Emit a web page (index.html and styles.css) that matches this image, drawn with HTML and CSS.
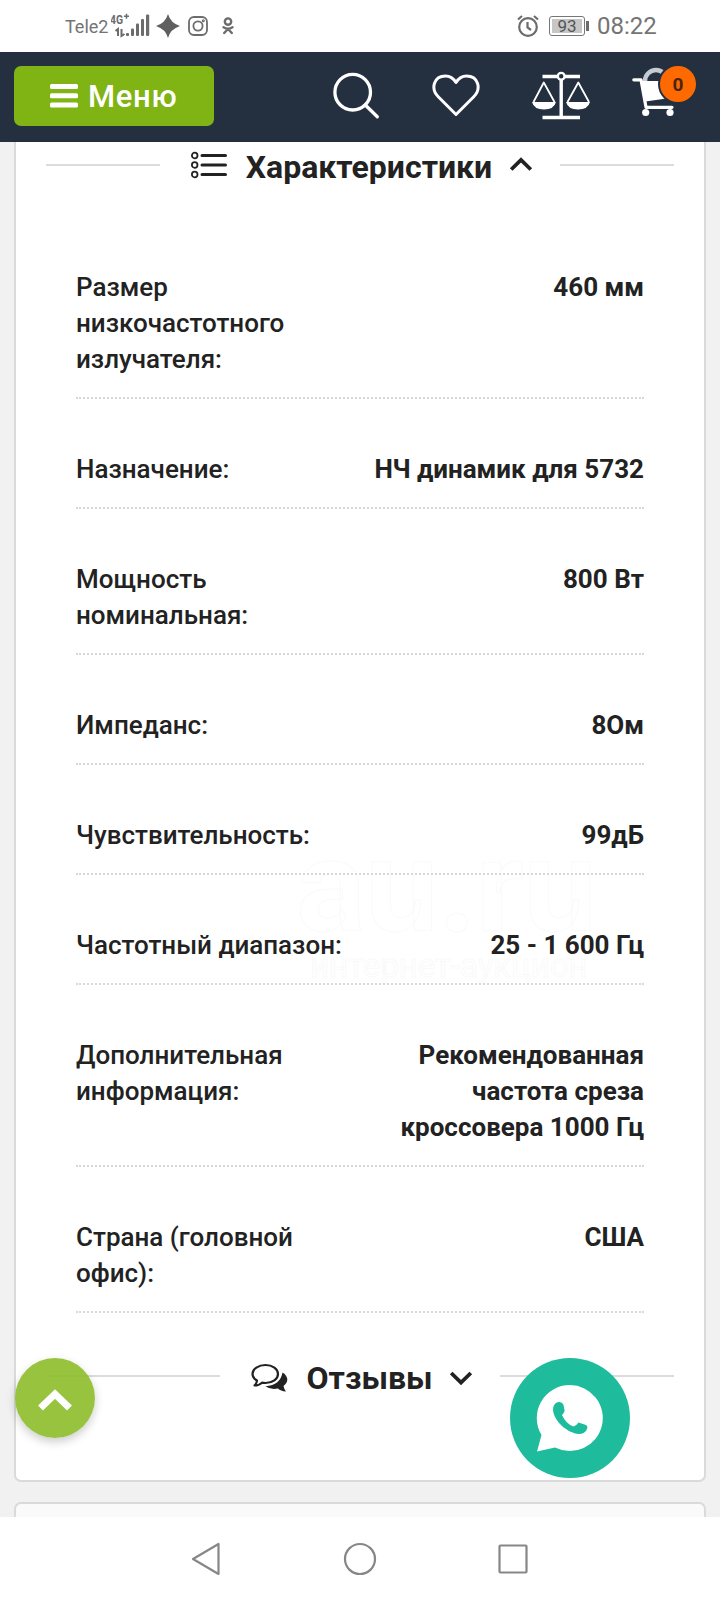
FILE: index.html
```html
<!DOCTYPE html>
<html lang="ru">
<head>
  <meta charset="UTF-8" />
  <meta name="viewport" content="width=device-width, initial-scale=1.0"/>
  <title>Характеристики</title>
  <link rel="stylesheet" href="styles.css">
</head>
<body>

<div class="status-bar">
  <span class="operator">Tele2</span>
  <svg class="signal" width="40" height="26" viewBox="0 0 40 26" fill="#6c6c6c">
    <text x="-1" y="11" font-size="13" font-weight="700" textLength="13" lengthAdjust="spacingAndGlyphs">4G</text>
    <path d="M13 3.200h5M15.500 .8v5" stroke="#6c6c6c" stroke-width="1.500"/>
    <path d="M4.500 18l2.500-2v7M10.500 16v7l3-2" stroke="#6c6c6c" stroke-width="2" fill="none"/>
    <rect x="15" y="20" width="3" height="3" rx="1"/>
    <rect x="20" y="15.500" width="3" height="7.500" rx="1"/>
    <rect x="25" y="10.500" width="3" height="12.500" rx="1"/>
    <rect x="30" y="6" width="3" height="17" rx="1"/>
    <rect x="35" y="1.500" width="3.200" height="21.500" rx="1"/>
  </svg>
  <svg class="star" width="24" height="24" viewBox="0 0 24 24" fill="#5f5f5f">
    <path d="M12 0Q14.500 9 24 12Q14.500 15 12 24Q9.500 15 0 12Q9.500 9 12 0z"/>
  </svg>
  <svg class="insta" width="20" height="20" viewBox="0 0 20 20" fill="none" stroke="#6c6c6c" stroke-width="1.800">
    <rect x="1" y="1" width="18" height="18" rx="5"/>
    <circle cx="10" cy="10" r="4.600"/>
    <circle cx="15.300" cy="4.700" r=".6"/>
  </svg>
  <svg class="ok" width="12" height="18" viewBox="0 0 12 18" fill="none" stroke="#6c6c6c" stroke-width="2.400" stroke-linecap="round">
    <circle cx="6" cy="4.600" r="3.200"/>
    <path d="M1.500 10.200q4.500 2.800 9 0M6 12l-3.800 4M6 12l3.800 4"/>
  </svg>
  <svg class="alarm" width="22" height="22" viewBox="0 0 22 22" fill="none" stroke="#6c6c6c" stroke-width="2.200">
    <circle cx="11" cy="12" r="8.800"/>
    <path d="M10.500 7v5.500l3.500 2.500M1 4.500L5 1M21 4.500L17 1"/>
  </svg>
  <div class="battery"><span class="battery-level">93</span></div>
  <span class="clock">08:22</span>
</div>

<header class="navbar">
  <button class="menu-btn" type="button">
    <svg width="28" height="24" viewBox="0 0 28 24" fill="#fff">
      <rect y="0" width="28" height="5" rx="1.500"/>
      <rect y="9.200" width="28" height="5" rx="1.500"/>
      <rect y="18.500" width="28" height="5" rx="1.500"/>
    </svg>
    <span>Меню</span>
  </button>
  <nav class="nav-icons">
    <svg width="48" height="60" viewBox="0 0 48 60" fill="none" stroke="#fff" stroke-width="3.300" stroke-linecap="round">
      <circle cx="20.700" cy="25.200" r="17.800"/>
      <path d="M33.300 38L45.300 49.800"/>
    </svg>
    <svg width="48" height="60" viewBox="0 0 48 60" fill="none" stroke="#fff" stroke-width="3" stroke-linejoin="round">
      <path d="M24 47.500L6.500 30C-2 21.500 2 9 13.500 9C18.500 9 21.500 11.500 24 15.500C26.500 11.500 29.500 9 34.500 9C46 9 50 21.500 41.500 30z"/>
    </svg>
    <svg width="58" height="60" viewBox="0 0 58 60" fill="none" stroke="#fff" stroke-width="1.800" stroke-linejoin="round">
      <path d="M10.500 9.500H25M33 9.500H48M10.500 50.500H48M29.200 13V50" stroke-width="3.400"/>
      <circle cx="29.200" cy="9.300" r="3.400" stroke-width="2.400"/>
      <path d="M1.500 35L11.800 15.500L22.500 35M35.500 35L46.300 15.500L57 35"/>
      <path d="M0 35h24q-2 7.500-12 7.500T0 35zM34 35h24q-2 7.500-12 7.500T34 35z" fill="#fff" stroke="none"/>
    </svg>
    <div class="cart">
      <svg width="48" height="60" viewBox="0 0 48 60" fill="#fff">
        <path d="M13 14a11 11 0 0 1 22 0" fill="none" stroke="#c5cbd3" stroke-width="4.500"/>
        <path d="M8 14H42L38 31L13.500 34.500z"/>
        <path d="M1.800 12.800H9L14 40.300H40" fill="none" stroke="#fff" stroke-width="3.200" stroke-linecap="round" stroke-linejoin="round"/>
        <circle cx="13.700" cy="45.500" r="3.600"/>
        <circle cx="38" cy="45.500" r="3.600"/>
      </svg>
      <span class="badge">0</span>
    </div>
  </nav>
</header>

<main class="page">
  <section class="card card-main">
    <div class="watermark">
      <span class="watermark-logo">au.ru</span>
      <span class="watermark-text">интернет-аукцион</span>
    </div>

    <div class="section-head">
      <svg class="head-icon" width="36" height="28" viewBox="0 0 36 28" fill="none" stroke="#222" stroke-width="1.800">
        <circle cx="3.700" cy="4.500" r="2.800"/>
        <circle cx="3.700" cy="14" r="2.800"/>
        <circle cx="3.700" cy="23.500" r="2.800"/>
        <path d="M11 4.500H34.500M11 14H34.500M11 23.500H34.500" stroke-width="3" stroke-linecap="round"/>
      </svg>
      <h2>Характеристики</h2>
      <svg class="chevron chevron-up" width="24" height="16" viewBox="0 0 24 16" fill="none" stroke="#222" stroke-width="3.800">
        <path d="M2.200 12.500L12 3L21.800 12.500"/>
      </svg>
    </div>

    <dl class="specs">
      <div class="spec"><dt>Размер низкочастотного излучателя:</dt><dd>460 мм</dd></div>
      <div class="spec"><dt>Назначение:</dt><dd>НЧ динамик для 5732</dd></div>
      <div class="spec"><dt>Мощность номинальная:</dt><dd>800 Вт</dd></div>
      <div class="spec"><dt>Импеданс:</dt><dd>8Ом</dd></div>
      <div class="spec"><dt>Чувствительность:</dt><dd>99дБ</dd></div>
      <div class="spec"><dt>Частотный диапазон:</dt><dd>25 - 1 600 Гц</dd></div>
      <div class="spec"><dt>Дополнительная информация:</dt><dd>Рекомендованная частота среза кроссовера 1000 Гц</dd></div>
      <div class="spec"><dt>Страна (головной офис):</dt><dd>США</dd></div>
    </dl>

    <div class="section-head reviews-head">
      <svg class="head-icon" width="37" height="30" viewBox="0 0 37 30">
        <path d="M31.500 9.500C38 13.500 37.500 19.500 32.500 23Q33 26 35 28.500Q29.500 28 27 25.500Q19.500 27 14.500 23.200Q29.500 22 31.500 9.500z" fill="#222"/>
        <path d="M14.500 2C21.500 2 27 6 27 11S21.500 20 14.500 20Q12.500 20 11 19.700Q8 22.500 3.500 22.500Q6 20 6 17.500Q1.500 15 1.500 11C1.500 6 7.500 2 14.500 2z" fill="#fff" stroke="#222" stroke-width="2.200" stroke-linejoin="round"/>
      </svg>
      <h2>Отзывы</h2>
      <svg class="chevron chevron-down" width="24" height="16" viewBox="0 0 24 16" fill="none" stroke="#222" stroke-width="3.800">
        <path d="M2.200 3L12 12.500L21.800 3"/>
      </svg>
    </div>
  </section>

  <section class="card card-next"></section>
</main>

<button class="to-top" type="button">
  <svg width="34" height="24" viewBox="0 0 34 24" fill="none" stroke="#fff" stroke-width="7">
    <path d="M2.500 20L17 6L31.500 20"/>
  </svg>
</button>

<a class="whatsapp">
  <svg width="68" height="68" viewBox="0 0 68 68">
    <path d="M34 1A33 33 0 1 1 19 63.500L1 67.500L5.500 51A33 33 0 0 1 34 1z" fill="#fff"/>
    <path d="M20 19C23 17 26.500 18.500 27.500 21L28.500 26Q29 28 26 31Q30 40 37.500 42.500Q41 41 42.500 38.500L50 41Q52 42 51 45Q49 50 43 50C31 49 18 37 17 26Q17 21 20 19z" fill="#1ebc9c"/>
  </svg>
</a>

<footer class="system-nav">
  <svg width="32" height="34" viewBox="0 0 32 34" fill="none" stroke="#878787" stroke-width="2.200" stroke-linejoin="round">
    <path d="M2 17L27.500 2V32z"/>
  </svg>
  <svg width="34" height="34" viewBox="0 0 34 34" fill="none" stroke="#878787" stroke-width="2.200">
    <circle cx="17" cy="17" r="15"/>
  </svg>
  <svg width="32" height="34" viewBox="0 0 32 34" fill="none" stroke="#878787" stroke-width="2.200">
    <rect x="2.500" y="3.500" width="27" height="27" rx="1"/>
  </svg>
</footer>

</body>
</html>
```
FILE: styles.css
```css
* {
  box-sizing: border-box;
}

body {
  margin: 0;
  height: 1600px;
  display: flex;
  flex-direction: column;
  font-family: Roboto, sans-serif;
  color: #222;
  background: #fff;
  overflow: hidden;
}

svg {
  display: block;
  flex: none;
}

/* phone status bar */
.status-bar {
  display: flex;
  align-items: center;
  height: 52px;
  padding: 0 64px 0 65px;
  color: #747474;
}

.operator {
  width: 46px;
  font-size: 18px;
}

.signal {
  margin-right: 5px;
}

.insta {
  margin-left: 8px;
}

.ok {
  margin-left: 14px;
}

.alarm {
  margin-left: auto;
}

.battery {
  position: relative;
  width: 36px;
  height: 20px;
  margin-left: 10px;
  padding: 2px;
  border: 1px solid #777;
  border-radius: 3px;
}

.battery::after {
  content: "";
  position: absolute;
  right: -5px;
  top: 4px;
  width: 3px;
  height: 10px;
  background: #6c6c6c;
}

.battery-level {
  display: block;
  width: 30px;
  height: 14px;
  background: #c6c6c6;
  color: #555;
  font-size: 17px;
  line-height: 15px;
  text-align: center;
}

.clock {
  width: 59px;
  margin-left: 12px;
  font-size: 24px;
  line-height: 52px;
}

/* site header */
.navbar {
  display: flex;
  align-items: center;
  justify-content: space-between;
  height: 90px;
  padding: 0 40px 0 14px;
  background: #242f40;
}

.menu-btn {
  display: flex;
  align-items: center;
  gap: 10px;
  width: 200px;
  height: 60px;
  padding: 0 0 0 36px;
  margin-bottom: 2px;
  border: none;
  border-radius: 7px;
  background: #80b314;
  color: #fff;
  font-family: inherit;
  font-size: 31px;
  font-weight: 500;
  letter-spacing: 0.7px;
}

.nav-icons {
  display: flex;
  gap: 52px;
}

.cart {
  position: relative;
  margin-left: -10px;
}

.badge {
  position: absolute;
  left: 26px;
  top: -3px;
  width: 40px;
  height: 40px;
  border: 2px solid #242f40;
  border-radius: 50%;
  background: #ff6a00;
  color: #4a2410;
  font-size: 19px;
  font-weight: 700;
  line-height: 37px;
  text-align: center;
}

/* content */
.page {
  height: 1375px;
  padding: 0 14px;
  background: #f1f1f1;
  overflow: hidden;
}

.card {
  position: relative;
  border: 2px solid #dadada;
  background: #fff;
}

.card-main {
  height: 1340px;
  padding: 0 30px;
  border-top: none;
  border-radius: 0 0 7px 7px;
}

.card-next {
  height: 60px;
  margin-top: 20px;
  border-radius: 7px;
  background: #fafafa;
}

.section-head {
  position: relative;
  display: flex;
  align-items: center;
  height: 46px;
}

.section-head::before,
.section-head::after {
  content: "";
  flex: 1;
  height: 2px;
  background: #dcdcdc;
}

.section-head h2 {
  margin: 4px 0 0;
  font-size: 32px;
  font-weight: 700;
  line-height: 40px;
}

.head-icon {
  margin: 0 19px 0 31px;
}

.chevron {
  margin: 0 27px 0 17px;
}

.chevron-down {
  margin-top: 4px;
}

.reviews-head .head-icon {
  margin-top: 3px;
}

.specs {
  position: relative;
  margin: 81px 30px 0;
}

.spec {
  display: flex;
  justify-content: space-between;
  margin-bottom: 52px;
  padding-bottom: 20px;
  border-bottom: 2px dotted #d8d8d8;
  font-size: 26px;
  line-height: 36px;
}

.spec dt {
  max-width: 284px;
  font-weight: 500;
}

.spec dd {
  max-width: 284px;
  margin: 0;
  font-weight: 700;
  text-align: right;
}

.reviews-head {
  margin-top: -12px;
}

.watermark {
  position: absolute;
  left: 280px;
  top: 682px;
  display: flex;
  flex-direction: column;
  color: #fff;
  -webkit-text-stroke: 1px #fafafa;
}

.watermark-logo {
  font-size: 130px;
  font-weight: 700;
  line-height: 126px;
}

.watermark-text {
  padding-left: 14px;
  font-size: 33px;
  line-height: 32px;
}

/* floating buttons */
.to-top,
.whatsapp {
  position: absolute;
  display: flex;
  align-items: center;
  justify-content: center;
  border: none;
  border-radius: 50%;
}

.to-top {
  left: 15px;
  top: 1358px;
  width: 80px;
  height: 80px;
  padding: 4px 1px 0 0;
  background: rgba(140, 189, 41, 0.9);
  box-shadow: 0 4px 10px rgba(0, 0, 0, 0.2);
}

.whatsapp {
  left: 510px;
  top: 1358px;
  width: 120px;
  height: 120px;
  background: #1ebc9c;
}

/* phone buttons */
.system-nav {
  display: flex;
  align-items: center;
  justify-content: center;
  gap: 120px;
  height: 83px;
  background: #fff;
}
```
